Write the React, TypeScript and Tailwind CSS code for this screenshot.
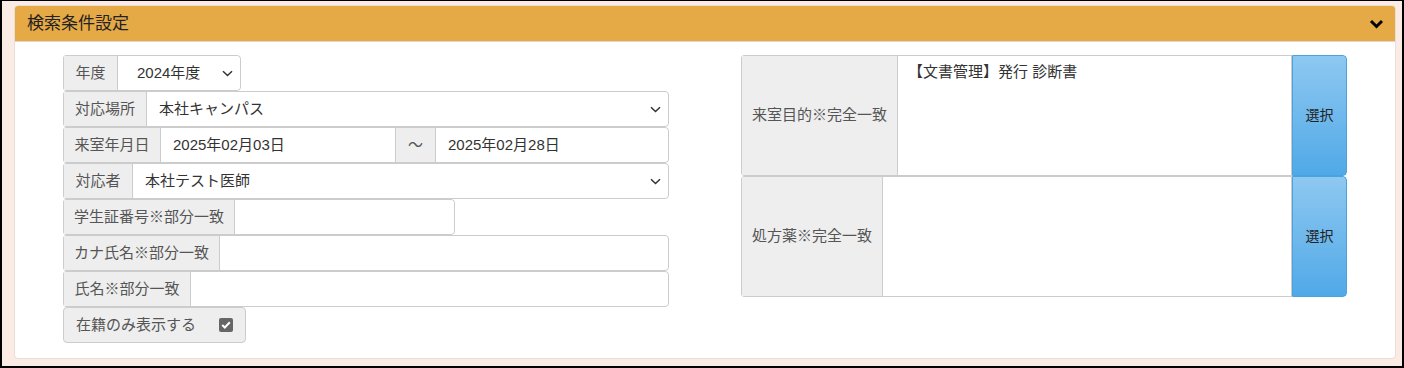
import React from "react";

const FONT = "font-['Liberation_Sans','Noto_Sans_CJK_JP',sans-serif]";

const Chevron = () => (
  <svg width="11" height="7" viewBox="0 0 11 7" className="shrink-0">
    <path d="M1 1.2 L5.5 5.5 L10 1.2" fill="none" stroke="#333" strokeWidth="1.5" />
  </svg>
);

const Label = ({ children, w }: { children: React.ReactNode; w: string }) => (
  <div className={`${w} h-full shrink-0 flex items-center justify-center whitespace-nowrap bg-[#eeeeee] border border-[#cccccc] text-[#555] text-[15px]`}>
    {children}
  </div>
);

const Row = ({ children, w = "w-[606px]" }: { children: React.ReactNode; w?: string }) => (
  <div className={`${w} h-[36px] flex rounded-[4px] overflow-hidden`}>{children}</div>
);

const Field = ({ value, select }: { value?: string; select?: boolean }) => (
  <div className="flex-1 h-full flex items-center justify-between whitespace-nowrap pl-3 pr-[7px] bg-white border border-l-0 border-[#cccccc] text-[#333] text-[15px] rounded-r-[4px]">
    <span>{value}</span>
    {select && <Chevron />}
  </div>
);

export default function App() {
  return (
    <div className={`${FONT} w-[1404px] h-[368px] bg-[#faece5] border-l-2 border-r-2 border-t border-b-2 border-black pl-[12px] pr-[6px] pt-[4px]`}>
      <div className="w-[1382px] h-[354px] bg-white border border-[#eadfd8] rounded-[4px] overflow-hidden">
        <div className="h-[36px] bg-[#e5a945] flex items-center justify-between pl-3 pr-[11px] border-b border-[#e0d6cf]">
          <span className="text-[17px] text-[#222] pt-[1px]">検索条件設定</span>
          <svg width="15" height="10" viewBox="0 0 15 10">
            <path d="M2 2 L7.5 7.5 L13 2" fill="none" stroke="#000" strokeWidth="3" />
          </svg>
        </div>
        <div className="flex pt-[13px] pl-[48px]">
          <div className="flex flex-col w-[606px]">
            <Row w="w-[178px]">
              <Label w="w-[55px]">年度</Label>
              <div className="flex-1 h-full flex items-center justify-between whitespace-nowrap pl-[19px] pr-[7px] bg-white border border-l-0 border-[#cccccc] text-[#333] text-[15px] rounded-r-[4px]">
                <span>2024年度</span>
                <Chevron />
              </div>
            </Row>
            <Row>
              <Label w="w-[84px]">対応場所</Label>
              <Field value="本社キャンパス" select />
            </Row>
            <Row>
              <Label w="w-[98px]">来室年月日</Label>
              <div className="w-[235px] h-full flex items-center whitespace-nowrap pl-3 bg-white border border-l-0 border-[#cccccc] text-[#333] text-[15px]">
                2025年02月03日
              </div>
              <div className="w-[40px] h-full shrink-0 flex items-center justify-center bg-[#eeeeee] border border-l-0 border-[#cccccc] text-[#555] text-[15px]">
                ～
              </div>
              <Field value="2025年02月28日" />
            </Row>
            <Row>
              <Label w="w-[70px]">対応者</Label>
              <Field value="本社テスト医師" select />
            </Row>
            <Row w="w-[392px]">
              <Label w="w-[172px]">学生証番号※部分一致</Label>
              <Field />
            </Row>
            <Row>
              <Label w="w-[157px]">カナ氏名※部分一致</Label>
              <Field />
            </Row>
            <Row>
              <Label w="w-[128px]">氏名※部分一致</Label>
              <Field />
            </Row>
            <div className="w-[183px] h-[36px] flex items-center justify-between whitespace-nowrap pl-3 pr-[12px] bg-[#eeeeee] border border-[#cccccc] rounded-[4px] text-[#555] text-[15px]">
              <span>在籍のみ表示する</span>
              <span className="w-[14px] h-[14px] rounded-[2px] bg-[#666] flex items-center justify-center">
                <svg width="10" height="8" viewBox="0 0 10 8">
                  <path d="M1.2 4 L3.8 6.5 L8.8 1.3" fill="none" stroke="#fff" strokeWidth="2" />
                </svg>
              </span>
            </div>
          </div>
          <div className="flex flex-col ml-[72px] w-[606px]">
            {[
              { label: "来室目的※完全一致", w: "w-[157px]", value: "【文書管理】発行 診断書" },
              { label: "処方薬※完全一致", w: "w-[142px]", value: "" },
            ].map((r, i) => (
              <div key={i} className="h-[121px] flex rounded-[4px] overflow-hidden">
                <div className={`${r.w} h-full shrink-0 flex items-center justify-center whitespace-nowrap bg-[#eeeeee] border border-[#cccccc] text-[#555] text-[15px]`}>
                  {r.label}
                </div>
                <div className="flex-1 h-full bg-white border border-l-0 border-[#cccccc] text-[#333] text-[15px] pl-[10px] pt-[5px] whitespace-nowrap">
                  {r.value}
                </div>
                <div className="w-[55px] h-full shrink-0 flex items-center justify-center bg-gradient-to-b from-[#8dc8f1] to-[#4fa9e7] border border-[#4aa3df] text-[#222] text-[14px] rounded-r-[4px]">
                  選択
                </div>
              </div>
            ))}
          </div>
        </div>
      </div>
    </div>
  );
}
